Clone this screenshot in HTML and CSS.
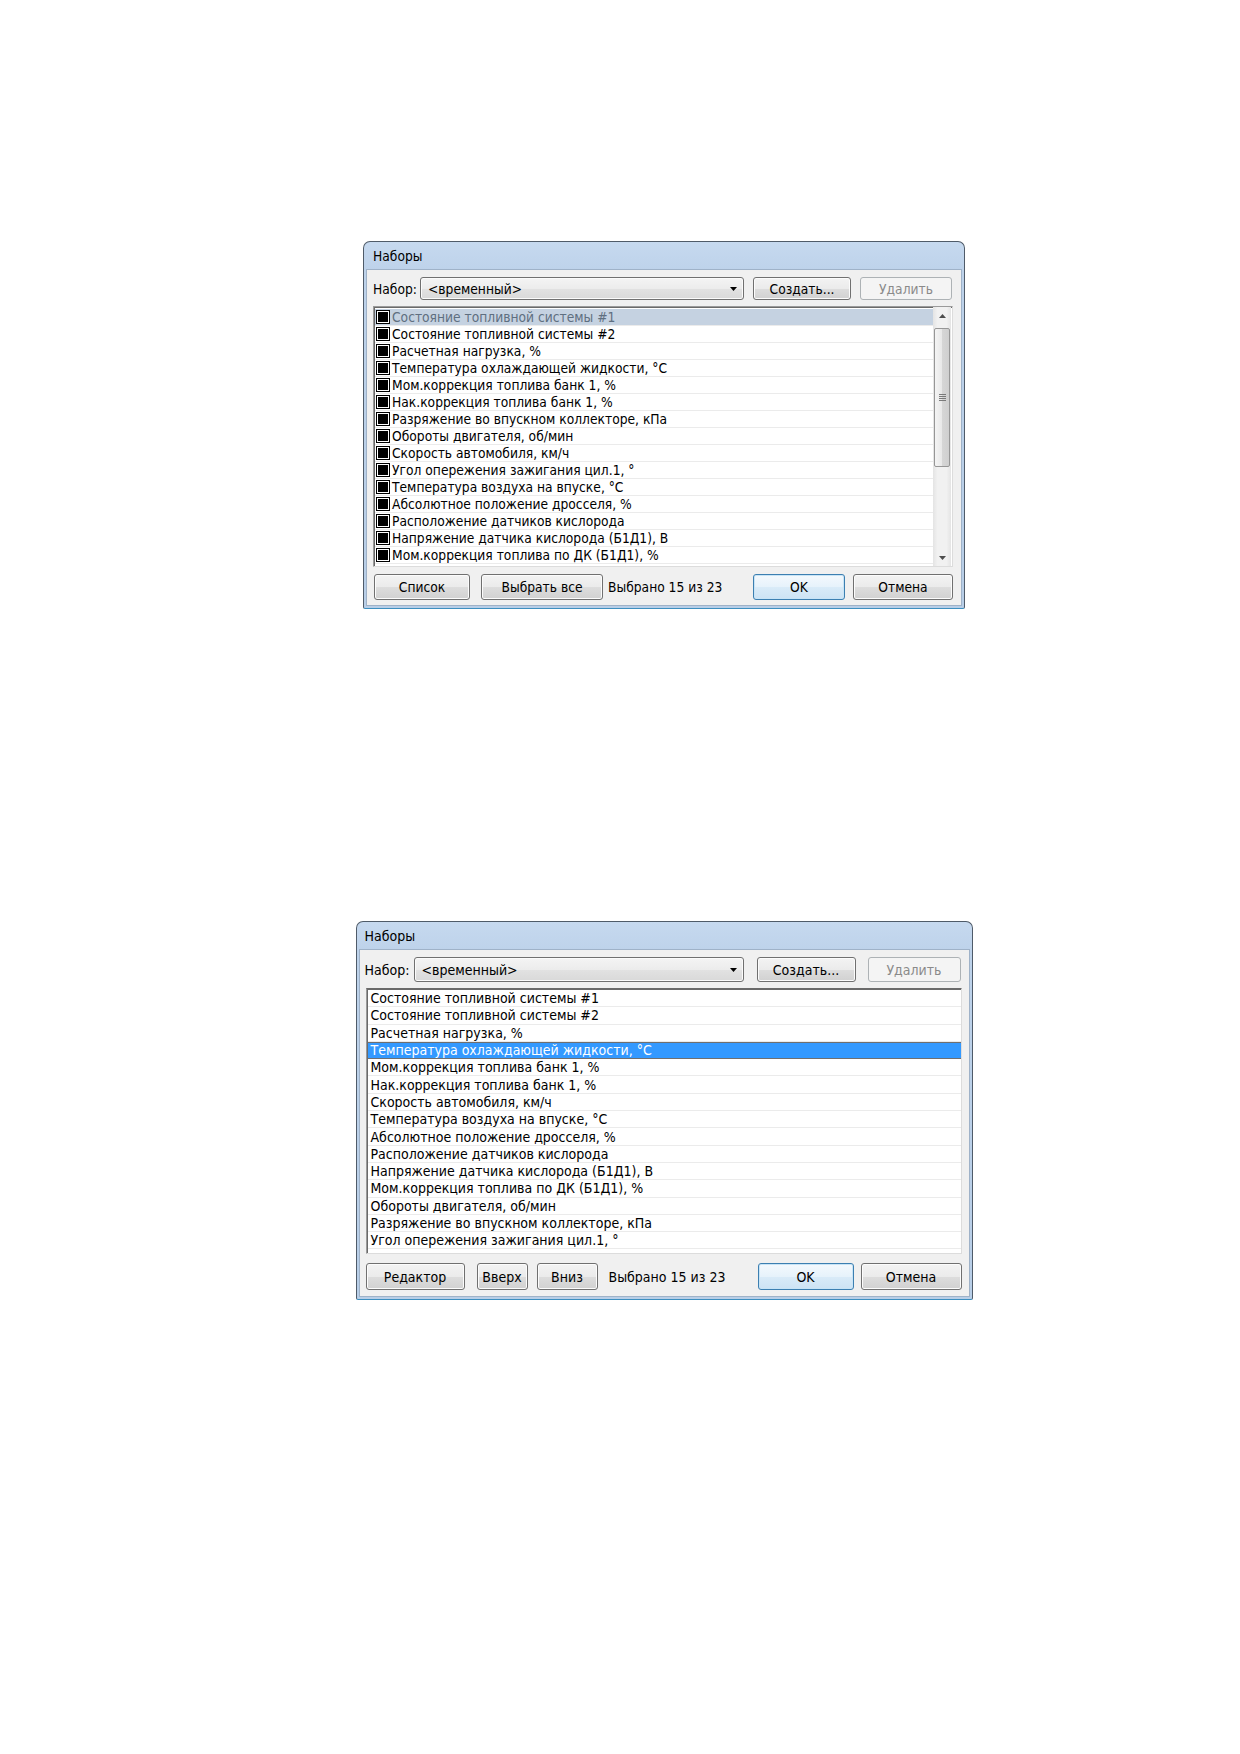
FILE: index.html
```html
<!DOCTYPE html>
<html lang="ru">
<head>
  <meta charset="UTF-8">
  <title>Наборы</title>
  <link rel="stylesheet" href="styles.css">
</head>
<body>

<div class="page">

  <!-- набор параметров: режим выбора -->
  <div class="dialog dialog-select">
    <div class="caption">Наборы</div>
    <div class="client">
      <div class="toolbar">
        <span class="field-label">Набор:</span>
        <div class="combo"><span>&lt;временный&gt;</span>
          <svg class="combo-arrow" width="7" height="4" viewBox="0 0 7 4"><polygon points="0,0 7,0 3.5,4" fill="#000"/></svg>
        </div>
        <button class="btn btn-create">Создать...</button>
        <button class="btn btn-delete" disabled>Удалить</button>
      </div>

      <div class="listbox">
        <div class="rows">
          <div class="row row-inactive"><span class="swatch"></span>Состояние топливной системы #1</div>
          <div class="row"><span class="swatch"></span>Состояние топливной системы #2</div>
          <div class="row"><span class="swatch"></span>Расчетная нагрузка, %</div>
          <div class="row"><span class="swatch"></span>Температура охлаждающей жидкости, °C</div>
          <div class="row"><span class="swatch"></span>Мом.коррекция топлива банк 1, %</div>
          <div class="row"><span class="swatch"></span>Нак.коррекция топлива банк 1, %</div>
          <div class="row"><span class="swatch"></span>Разряжение во впускном коллекторе, кПа</div>
          <div class="row"><span class="swatch"></span>Обороты двигателя, об/мин</div>
          <div class="row"><span class="swatch"></span>Скорость автомобиля, км/ч</div>
          <div class="row"><span class="swatch"></span>Угол опережения зажигания цил.1, °</div>
          <div class="row"><span class="swatch"></span>Температура воздуха на впуске, °C</div>
          <div class="row"><span class="swatch"></span>Абсолютное положение дросселя, %</div>
          <div class="row"><span class="swatch"></span>Расположение датчиков кислорода</div>
          <div class="row"><span class="swatch"></span>Напряжение датчика кислорода (Б1Д1), В</div>
          <div class="row"><span class="swatch"></span>Мом.коррекция топлива по ДК (Б1Д1), %</div>
        </div>
        <div class="scrollbar">
          <div class="sb-btn"><svg width="7" height="4" viewBox="0 0 7 4"><polygon points="3.5,0 7,4 0,4" fill="#4d4d4d"/></svg></div>
          <div class="sb-thumb"><span class="grip"></span></div>
          <div class="sb-track"></div>
          <div class="sb-btn"><svg width="7" height="4" viewBox="0 0 7 4"><polygon points="0,0 7,0 3.5,4" fill="#4d4d4d"/></svg></div>
        </div>
      </div>

      <div class="footer">
        <button class="btn btn-list">Список</button>
        <button class="btn btn-all">Выбрать все</button>
        <span class="counter">Выбрано 15 из 23</span>
        <button class="btn btn-default btn-ok">OK</button>
        <button class="btn btn-cancel">Отмена</button>
      </div>
    </div>
  </div>

  <!-- набор параметров: режим порядка -->
  <div class="dialog dialog-order">
    <div class="caption">Наборы</div>
    <div class="client">
      <div class="toolbar">
        <span class="field-label">Набор:</span>
        <div class="combo"><span>&lt;временный&gt;</span>
          <svg class="combo-arrow" width="7" height="4" viewBox="0 0 7 4"><polygon points="0,0 7,0 3.5,4" fill="#000"/></svg>
        </div>
        <button class="btn btn-create">Создать...</button>
        <button class="btn btn-delete" disabled>Удалить</button>
      </div>

      <div class="listbox">
        <div class="rows">
          <div class="row">Состояние топливной системы #1</div>
          <div class="row">Состояние топливной системы #2</div>
          <div class="row">Расчетная нагрузка, %</div>
          <div class="row row-active">Температура охлаждающей жидкости, °C</div>
          <div class="row">Мом.коррекция топлива банк 1, %</div>
          <div class="row">Нак.коррекция топлива банк 1, %</div>
          <div class="row">Скорость автомобиля, км/ч</div>
          <div class="row">Температура воздуха на впуске, °C</div>
          <div class="row">Абсолютное положение дросселя, %</div>
          <div class="row">Расположение датчиков кислорода</div>
          <div class="row">Напряжение датчика кислорода (Б1Д1), В</div>
          <div class="row">Мом.коррекция топлива по ДК (Б1Д1), %</div>
          <div class="row">Обороты двигателя, об/мин</div>
          <div class="row">Разряжение во впускном коллекторе, кПа</div>
          <div class="row">Угол опережения зажигания цил.1, °</div>
        </div>
      </div>

      <div class="footer">
        <button class="btn btn-editor">Редактор</button>
        <button class="btn btn-up">Вверх</button>
        <button class="btn btn-down">Вниз</button>
        <span class="counter">Выбрано 15 из 23</span>
        <button class="btn btn-default btn-ok">OK</button>
        <button class="btn btn-cancel">Отмена</button>
      </div>
    </div>
  </div>

</div>

</body>
</html>
```

FILE: styles.css
```css
* {
  box-sizing: border-box;
}
body {
  margin: 0;
  background: #fff;
  font-family: "DejaVu Sans Condensed", "DejaVu Sans", sans-serif;
  font-size: 13.7px;
  color: #000;
}
.page {
  display: flex;
  flex-direction: column;
  align-items: center;
  gap: 312px;
  padding: 241px 0 0 88px;
}

/* window frame */
.dialog {
  border: 1px solid #4f5b69;
  border-bottom-color: #3d8fc0;
  border-radius: 7px 7px 2px 2px;
  background: linear-gradient(#c6d9ef, #bdd2ea 30px, #b8cee7);
  padding: 0 3px 3px;
}
.dialog-select { width: 602px; }
.dialog-order { width: 617px; font-size: 14px; }

.caption {
  height: 28px;
  line-height: 28px;
  padding-left: 6px;
}
.dialog-order .caption { padding-left: 5px; }

.client {
  background: #f0f0f0;
  box-shadow: 0 0 0 1px #9fb2c8;
  padding: 7px 8px 5px 6px;
}
.dialog-order .client { padding: 7px 7px 6px 5px; }

/* top line with the combo */
.toolbar {
  display: flex;
  align-items: center;
  height: 23px;
}
.dialog-order .toolbar { height: 25px; }
.field-label { width: 47px; flex: none; }
.dialog-order .field-label { width: 49px; }

.combo {
  flex: none;
  width: 324px;
  height: 100%;
  display: flex;
  align-items: center;
  justify-content: space-between;
  padding: 0 6px 0 7px;
  border: 1px solid #707070;
  border-radius: 3px;
  background: linear-gradient(#f4f4f4, #ececec 50%, #e2e2e2 51%, #d9d9d9);
  box-shadow: inset 0 0 0 1px #fbfbfb;
}
.dialog-order .combo { width: 330px; }

.btn {
  flex: none;
  height: 100%;
  padding: 0;
  font: inherit;
  color: #000;
  border: 1px solid #707070;
  border-radius: 3px;
  background: linear-gradient(#f3f3f3, #ebebeb 50%, #dddddd 51%, #d1d1d1);
  box-shadow: inset 0 0 0 1px #fcfcfc;
}
.btn:disabled {
  color: #8a8a8a;
  border-color: #adb2b5;
  background: #f4f4f4;
  box-shadow: none;
}
.btn-default {
  border-color: #3c7fb1;
  background: linear-gradient(#f4f9fd, #e6f2fb 50%, #d9ebf8 51%, #cde3f4);
  box-shadow: inset 0 0 0 1px #c8e4f6;
}

.btn-create { width: 98px; margin-left: 9px; }
.btn-delete { width: 92px; margin-left: 9px; }
.dialog-order .btn-create { width: 99px; margin-left: 13px; }
.dialog-order .btn-delete { width: 93px; margin-left: 12px; }

/* list */
.listbox {
  display: flex;
  margin-top: 6px;
  height: 261px;
  background: #fff;
  border: 1px solid #9a9a9a;
  border-right-color: #dcdcdc;
  border-bottom-color: #dcdcdc;
  box-shadow: inset 1px 1px 0 #6a6a6a;
  overflow: hidden;
}
.dialog-order .listbox {
  height: 266px;
  margin-left: 1px;
  border-top-color: #6a6a6a;
}
.rows {
  flex: 1;
  padding-top: 2px;
  padding-left: 1px;
}
.dialog-order .rows { padding-top: 1px; }
.row {
  display: flex;
  align-items: center;
  height: 17px;
  padding-left: 1px;
  border-bottom: 1px solid #ebebeb;
  white-space: nowrap;
}
.dialog-order .row {
  height: 17.3px;
  padding-left: 3px;
}
.row-inactive {
  background: #c5d2e1;
  color: #5f6f80;
}
.row-active {
  background: #3399ff;
  color: #fff;
  border-bottom-color: #6f6f6f;
  box-shadow: inset 0 1px 0 #6f6f6f;
}

.swatch {
  flex: none;
  width: 14px;
  height: 14px;
  margin-right: 2px;
  border: 1px solid #000;
  background: #000;
  box-shadow: inset 0 0 0 1px #fff;
}

/* vertical scroll */
.scrollbar {
  flex: none;
  width: 18px;
  margin: 0 1px 0 0;
  display: flex;
  flex-direction: column;
  background: linear-gradient(90deg, #e4e4e4, #f1f1f1 25%, #f1f1f1 75%, #e4e4e4);
}
.sb-btn {
  height: 17px;
  display: flex;
  align-items: center;
  justify-content: center;
}
.sb-thumb {
  margin: 4px 1px 0;
  height: 139px;
  border: 1px solid #969696;
  border-radius: 2px;
  background: linear-gradient(90deg, #f4f4f4, #e8e8e8 50%, #d6d6d6 51%, #cfcfcf);
  display: flex;
  align-items: center;
  justify-content: center;
}
.grip {
  width: 7px;
  height: 7px;
  background: repeating-linear-gradient(#7a7a7a 0 1px, transparent 1px 2px);
}
.sb-track { flex: 1; }

/* bottom buttons */
.footer {
  display: flex;
  align-items: center;
  height: 26px;
  margin-top: 7px;
}
.dialog-order .footer {
  height: 27px;
  margin-top: 9px;
}
.counter { margin-left: 5px; white-space: nowrap; }
.dialog-order .counter { margin-left: 11px; }

.btn-list { width: 96px; margin-left: 1px; }
.btn-all { width: 122px; margin-left: 11px; }
.btn-editor { width: 99px; margin-left: 1px; }
.btn-up { width: 51px; margin-left: 12px; }
.btn-down { width: 61px; margin-left: 9px; }
.btn-ok { width: 92px; margin-left: auto; }
.btn-cancel { width: 100px; margin-left: 8px; }
.dialog-order .btn-ok { width: 96px; }
.dialog-order .btn-cancel { width: 101px; margin-left: 7px; }
```
